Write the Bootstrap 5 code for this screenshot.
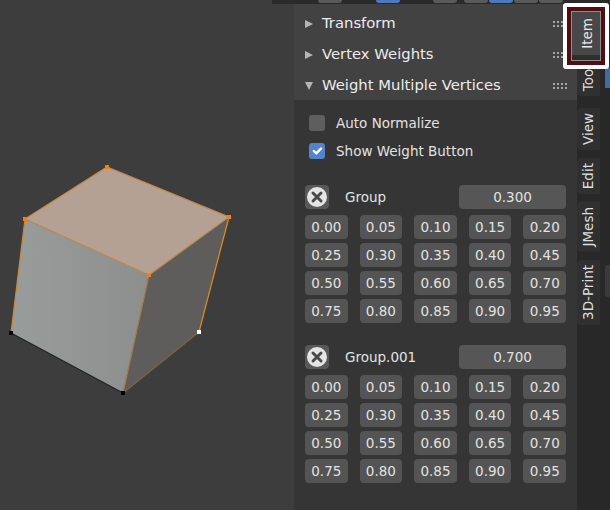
<!DOCTYPE html>
<html lang="en">
<head>
    <meta charset="UTF-8">
    <meta name="viewport" content="width=device-width, initial-scale=1.0">
    <title>Weight Multiple Vertices</title>
    <link rel="stylesheet" href="https://cdn.jsdelivr.net/npm/bootstrap@5.3.0/dist/css/bootstrap.min.css">
    <style>
        html, body {
            margin: 0;
            background-color: #3d3d3d;
        }

        .app {
            position: relative;
            width: 610px;
            height: 510px;
            overflow: hidden;
            font-family: "DejaVu Sans", sans-serif;
            font-size: 13.5px;
            color: #e2e2e2;
        }

        /* strip of the header that is cut off at the top */
        .top-strip {
            height: 4px;
            margin-left: 272px;
            background-color: #2a2a2a;
        }

        .strip-btn {
            height: 3px;
            width: 24px;
            background-color: #5a5a5a;
            border-radius: 0 0 3px 3px;
        }

        .strip-btn.on { background-color: #4d78bd; }
        .strip-a { margin-left: 46px; }
        .strip-b { margin-left: 34px; }
        .strip-c { margin-left: 33px; }
        .strip-d { margin-left: 7px; }
        .strip-e { margin-left: 1px; }

        .main-row { height: 506px; }

        .viewport-area { width: 294px; flex: none; }

        .side-panel {
            width: 283px;
            flex: none;
            background-color: #353535;
        }

        .panel-heads {
            height: 96px;
            background-color: #424242;
            padding-top: 4px;
        }

        .panel-head {
            height: 31px;
            padding: 0 9px 0 11px;
            font-size: 14.8px;
            color: #ececec;
        }

        .panel-head .head-label { margin-left: 9px; }

        .panel-body { padding: 9px 11px 0; }

        .check-row {
            height: 28px;
            padding-left: 4px;
        }

        .check-row .form-check-input {
            width: 16px;
            height: 16px;
            margin: 0 11px 0 0;
            background-color: #5e5e5e;
            border: 0;
            border-radius: 3px;
            opacity: 1;
        }

        .check-row .form-check-input:checked { background-color: #5482cb; }

        .group-head {
            height: 24px;
            margin-top: 20px;
            margin-bottom: 6px;
        }

        .group-second { margin-top: 22px; }

        .remove-btn {
            width: 24px;
            height: 24px;
            flex: none;
            background-color: #585858;
            border-radius: 4px;
        }

        .group-name {
            margin-left: 16px;
            width: 114px;
            flex: none;
        }

        .group-value {
            width: 107px;
            height: 24px;
            line-height: 24px;
            text-align: center;
            background-color: #565656;
            border-radius: 4px;
        }

        .weight-grid {
            display: grid;
            grid-template-columns: repeat(5, 1fr);
            column-gap: 12px;
            row-gap: 4px;
        }

        .weight-btn {
            height: 24px;
            padding: 0;
            border: 0;
            border-radius: 4px;
            background-color: #545454;
            color: #e2e2e2;
            font-size: 13.5px;
            line-height: 24px;
        }

        .tab-rail {
            flex: 1;
            background-color: #282828;
        }

        .tab-col {
            width: 26px;
            padding-top: 56px;
            gap: 8px;
        }

        .side-tab {
            width: 23px;
            padding: 5px 0;
            writing-mode: vertical-rl;
            transform: rotate(180deg);
            background-color: #303030;
            border-radius: 0 4px 4px 0;
            line-height: 23px;
            color: #dedede;
            white-space: nowrap;
        }

        .rail-edge { width: 7px; margin-left: 2px; }
        .edge-blue { height: 20px; margin-top: 64px; background-color: #46699f; }
        .edge-gray { height: 32px; margin-top: 177px; background-color: #3a3a3a; border-radius: 3px 0 0 3px; }

        /* annotation drawn over the active tab */
        .tab-mark {
            position: absolute;
            left: 563px;
            top: 3px;
            width: 46px;
            height: 66px;
            padding: 4px;
            background-color: #ffffff;
            border-radius: 3px;
        }

        .tab-mark-inner {
            height: 100%;
            border: 4px solid #4f0e12;
            background-color: #ffffff;
        }

        .tab-active {
            height: 100%;
            padding: 0 0 5px 3px;
            border: 1px solid #8d8d8d;
            background: linear-gradient(#484848 90%, #2e2e2e 90%);
            color: #e6e6e6;
        }

        .tab-active span {
            writing-mode: vertical-rl;
            transform: rotate(180deg);
        }
    </style>
</head>

<body>
    <div class="app d-flex flex-column">
        <div class="top-strip d-flex">
            <div class="strip-btn strip-a"></div>
            <div class="strip-btn on strip-b"></div>
            <div class="strip-btn strip-c"></div>
            <div class="strip-btn strip-d"></div>
            <div class="strip-btn on strip-e"></div>
            <div class="strip-btn strip-e"></div>
            <div class="strip-btn strip-e"></div>
        </div>

        <div class="main-row d-flex">
            <div class="viewport-area">
                <svg width="294" height="506" viewBox="0 4 294 506">
                    <defs>
                        <linearGradient id="leftFace" x1="0" y1="0" x2="1" y2="0">
                            <stop offset="0" stop-color="#989c9b"/>
                            <stop offset="1" stop-color="#8c8f8e"/>
                        </linearGradient>
                    </defs>
                    <polygon points="107,167 229,217 149,275 25,219" fill="#b5a194"/>
                    <polygon points="25,219 149,275 123,393 11,333" fill="url(#leftFace)"/>
                    <polygon points="149,275 229,217 199,332 123,393" fill="#5f5d5c"/>
                    <g fill="none" stroke-width="1.2">
                        <path d="M25 219 L107 167 L229 217 L149 275 Z" stroke="#c08a4c"/>
                        <path d="M229 217 L199 332" stroke="#e08c1e"/>
                        <path d="M25 219 L11 333" stroke="#c98a3a"/>
                        <path d="M149 275 L123 393" stroke="#a57c45"/>
                        <path d="M199 332 L123 393" stroke="#7e6242"/>
                        <path d="M11 333 L123 393" stroke="#222222"/>
                    </g>
                    <g fill="#f57f0a">
                        <rect x="105" y="165" width="4" height="4"/>
                        <rect x="227" y="215" width="4" height="4"/>
                        <rect x="23" y="217" width="4" height="4"/>
                        <rect x="147" y="273" width="4" height="4"/>
                    </g>
                    <rect x="9" y="331" width="4" height="4" fill="#000000"/>
                    <rect x="121" y="391" width="4" height="4" fill="#000000"/>
                    <rect x="197" y="330" width="4" height="4" fill="#ffffff"/>
                </svg>
            </div>

            <div class="side-panel">
                <div class="panel-heads">
                    <div class="panel-head d-flex align-items-center">
                        <svg width="8" height="8" viewBox="0 0 8 8"><path d="M0 0 L8 4 L0 8 Z" fill="#b4b4b4"/></svg>
                        <span class="head-label flex-grow-1">Transform</span>
                        <svg width="15" height="6" viewBox="0 0 15 6"><path d="M0 0h2v2H0zM4 0h2v2H4zM8 0h2v2H8zM12 0h2v2h-2zM0 4h2v2H0zM4 4h2v2H4zM8 4h2v2H8zM12 4h2v2h-2z" fill="#a6a6a6"/></svg>
                    </div>
                    <div class="panel-head d-flex align-items-center">
                        <svg width="8" height="8" viewBox="0 0 8 8"><path d="M0 0 L8 4 L0 8 Z" fill="#b4b4b4"/></svg>
                        <span class="head-label flex-grow-1">Vertex Weights</span>
                        <svg width="15" height="6" viewBox="0 0 15 6"><path d="M0 0h2v2H0zM4 0h2v2H4zM8 0h2v2H8zM12 0h2v2h-2zM0 4h2v2H0zM4 4h2v2H4zM8 4h2v2H8zM12 4h2v2h-2z" fill="#a6a6a6"/></svg>
                    </div>
                    <div class="panel-head d-flex align-items-center">
                        <svg width="8" height="8" viewBox="0 0 8 8"><path d="M0 0 L8 0 L4 8 Z" fill="#b4b4b4"/></svg>
                        <span class="head-label flex-grow-1">Weight Multiple Vertices</span>
                        <svg width="15" height="6" viewBox="0 0 15 6"><path d="M0 0h2v2H0zM4 0h2v2H4zM8 0h2v2H8zM12 0h2v2h-2zM0 4h2v2H0zM4 4h2v2H4zM8 4h2v2H8zM12 4h2v2h-2z" fill="#a6a6a6"/></svg>
                    </div>
                </div>

                <div class="panel-body">
                    <label class="check-row d-flex align-items-center">
                        <input class="form-check-input" type="checkbox">Auto Normalize
                    </label>
                    <label class="check-row d-flex align-items-center">
                        <input class="form-check-input" type="checkbox" checked>Show Weight Button
                    </label>

                    <div id="groups"></div>
                </div>
            </div>

            <div class="tab-rail d-flex">
                <div class="tab-col d-flex flex-column">
                    <div class="side-tab">Tool</div>
                    <div class="side-tab mt-1">View</div>
                    <div class="side-tab">Edit</div>
                    <div class="side-tab">JMesh</div>
                    <div class="side-tab">3D-Print</div>
                </div>
                <div class="rail-edge">
                    <div class="edge-blue"></div>
                    <div class="edge-gray"></div>
                </div>
            </div>
        </div>

        <div class="tab-mark">
            <div class="tab-mark-inner">
                <div class="tab-active d-flex align-items-center justify-content-center"><span>Item</span></div>
            </div>
        </div>
    </div>

    <script src="https://cdn.jsdelivr.net/npm/bootstrap@5.3.0/dist/js/bootstrap.bundle.min.js"></script>
    <script>
        const groups = [
            { name: 'Group', value: '0.300' },
            { name: 'Group.001', value: '0.700' }
        ];

        const removeIcon = `
            <svg width="24" height="24" viewBox="0 0 24 24">
                <circle cx="12" cy="12" r="10" fill="#e4e4e4"/>
                <path d="M8 8 L16 16 M16 8 L8 16" stroke="#4a4a4a" stroke-width="3" stroke-linecap="round"/>
            </svg>`;

        let html = '';
        groups.forEach((group, index) => {
            let buttons = '';
            for (let i = 0; i < 20; i++) {
                buttons += `<button type="button" class="weight-btn">${(i * 0.05).toFixed(2)}</button>`;
            }
            html += `
                <div class="group-head d-flex align-items-center ${index > 0 ? 'group-second' : ''}">
                    <div class="remove-btn">${removeIcon}</div>
                    <div class="group-name">${group.name}</div>
                    <div class="group-value">${group.value}</div>
                </div>
                <div class="weight-grid">${buttons}</div>
            `;
        });
        document.getElementById('groups').innerHTML = html;
    </script>
</body>

</html>
